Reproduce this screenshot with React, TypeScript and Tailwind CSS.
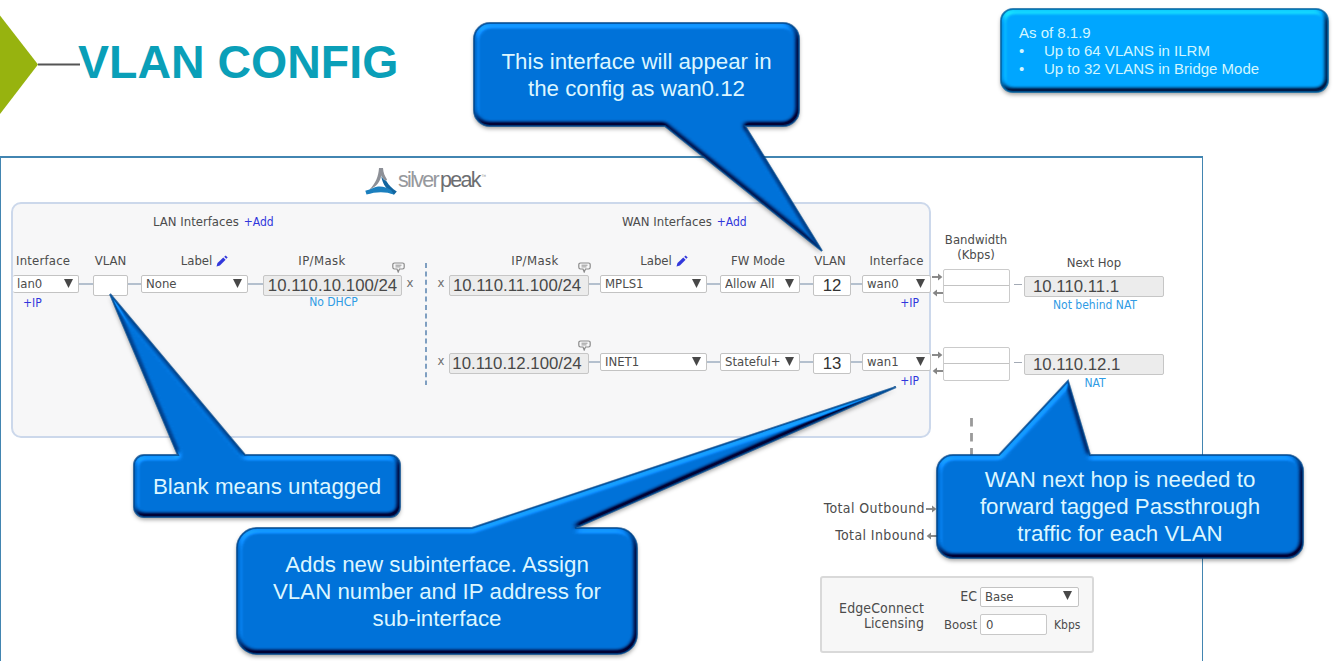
import type { ReactNode } from 'react'
import clsx from 'clsx'

interface WanRow {
  ip: string
  label: string
  fwMode: string
  vlan: string
  iface: string
  nextHop: string
  nat: string
}

const wanRows: WanRow[] = [
  {
    ip: '10.110.11.100/24',
    label: 'MPLS1',
    fwMode: 'Allow All',
    vlan: '12',
    iface: 'wan0',
    nextHop: '10.110.11.1',
    nat: 'Not behind NAT',
  },
  {
    ip: '10.110.12.100/24',
    label: 'INET1',
    fwMode: 'Stateful+',
    vlan: '13',
    iface: 'wan1',
    nextHop: '10.110.12.1',
    nat: 'NAT',
  },
]

// Shared bevel used by every blue shape
function BevelDefs() {
  return (
    <svg className="absolute h-0 w-0" aria-hidden="true">
      <defs>
        <filter id="bevel" x="-10%" y="-20%" width="120%" height="140%" colorInterpolationFilters="sRGB">
          <feGaussianBlur in="SourceAlpha" stdDeviation="2.8" result="soft" />
          <feDiffuseLighting in="soft" surfaceScale="6" diffuseConstant="1" lightingColor="#fff" result="light">
            <feDistantLight azimuth="243" elevation="45" />
          </feDiffuseLighting>
          <feComposite in="SourceGraphic" in2="light" operator="arithmetic" k1="0.72" k2="0.491" k3="0.3" k4="-0.212" result="lit" />
          <feComposite in="lit" in2="SourceAlpha" operator="in" result="shape" />
          <feDropShadow in="SourceGraphic" dx="0" dy="2.5" stdDeviation="2" floodColor="#000" floodOpacity="0.4" result="drop" />
          <feMerge>
            <feMergeNode in="drop" />
            <feMergeNode in="SourceGraphic" />
            <feMergeNode in="shape" />
          </feMerge>
        </filter>
        <filter id="rim" x="-10%" y="-20%" width="120%" height="140%">
          <feGaussianBlur stdDeviation="0.7" />
        </filter>
      </defs>
    </svg>
  )
}

function Callout({ className, path, children }: { className: string; path: string; children: ReactNode }) {
  return (
    <div className={clsx('absolute flex items-center justify-center', className)}>
      <svg className="absolute inset-0 h-full w-full overflow-visible">
        <path d={path} fill="#0072d9" filter="url(#bevel)" />
        <path d={path} fill="none" stroke="#00468c" strokeWidth="2" opacity=".75" filter="url(#rim)" />
      </svg>
      <p className="relative text-center text-[22.3px] leading-[27px] whitespace-nowrap text-[#dcf6ff]">{children}</p>
    </div>
  )
}

function Select({ value, className }: { value: string; className?: string }) {
  return (
    <div
      className={clsx(
        'flex h-[18px] shrink-0 items-center justify-between rounded-[2px] border border-[#c3c3c3] bg-white pr-[5px] pl-[4px] text-[13px]',
        className,
      )}
    >
      <span className="overflow-hidden whitespace-nowrap">{value}</span>
      <svg className="mb-[2px] h-[9px] w-[9px] shrink-0" viewBox="0 0 9 9">
        <path d="M0 0h9L4.5 9z" fill="#484848" />
      </svg>
    </div>
  )
}

function Link({ className }: { className: string }) {
  return <div className={clsx('mt-[8px] h-[2px] shrink-0 bg-[#b4c0ce]', className)} />
}

function IpBox({ value, className }: { value: string; className?: string }) {
  return (
    <div
      className={clsx(
        'relative flex h-[21px] shrink-0 items-center rounded-[2px] border-[1.5px] border-[#c6c6c6] bg-[#ececec] pt-[2px] font-[Liberation_Sans,sans-serif] text-[16.8px] leading-none whitespace-nowrap text-[#484848]',
        className,
      )}
    >
      {value}
    </div>
  )
}

function VlanBox({ value, className }: { value?: string; className?: string }) {
  return (
    <div
      className={clsx(
        'flex h-[21px] shrink-0 items-center justify-center rounded-[2px] border border-[#c3c3c3] bg-white pt-[1px] font-[Liberation_Sans,sans-serif] text-[16.8px] leading-none text-[#333]',
        className,
      )}
    >
      {value}
    </div>
  )
}

// Small comment bubble pinned above the IP field
function Comment({ className }: { className: string }) {
  return (
    <svg className={clsx('absolute h-[11px] w-[13px]', className)} viewBox="0 0 13 11" fill="none" stroke="#8b8b8b">
      <path d="M2.5 1h8a1.7 1.7 0 0 1 1.7 1.7v2.6A1.7 1.7 0 0 1 10.5 7h-3L6.2 10 5 7H2.5A1.7 1.7 0 0 1 .8 5.3V2.7A1.7 1.7 0 0 1 2.5 1z" strokeWidth="1.2" />
      <path d="M3.5 3.2h6M3.5 4.900h5" strokeWidth=".9" />
    </svg>
  )
}

function Pencil() {
  return (
    <svg className="ml-[4px] h-[12px] w-[12px] shrink-0" viewBox="0 0 12 12">
      <path d="M.5 11.500l1-3.500 5.800-5.600 2.300 2.300L3.900 10.400z" fill="#3238dc" />
      <path d="M8.200 1.700L9.700.4l2 2-1.400 1.400z" fill="#3238dc" />
    </svg>
  )
}

function Arrow({ left, className }: { left?: boolean; className?: string }) {
  return (
    <svg className={clsx('h-[8px] w-[11px] shrink-0', left && 'rotate-180', className)} viewBox="0 0 11 8">
      <path d="M0 4h8" fill="none" stroke="#858585" strokeWidth="1.9" />
      <path d="M6 .4L10.400 4 6 7.600z" fill="#858585" />
    </svg>
  )
}

function Remove({ className }: { className: string }) {
  return <span className={clsx('shrink-0 text-center text-[13px] leading-[15px] text-[#6e6e6e]', className)}>x</span>
}

function Logo() {
  return (
    <div className="flex h-[30px] items-center">
      <svg className="h-[27px] w-[32px]" viewBox="0 0 32 27">
        <path d="M14 0h4c.3 4.500 1.700 8 4 11.500l-1 1.500c-2.500-1.500-4-3.500-4.800-5.500C15.500 13 11.500 19 4.500 21.500 10.500 15.500 13.500 8.500 14 0z" fill="#8d9097" />
        <path d="M16.200 8c1.300 2.600 3 4.300 5.300 5.200 2.500 4 5.500 7.300 10.300 10.300L29 26.800C22 22 17.500 16.500 16.200 8z" fill="#12659f" />
        <path d="M.3 22.800C5 21.500 9 19.300 13 18.500c5-.5 9 1 13 3.500l3 4.600c-8-3.300-18-3.300-27.500 0z" fill="#1b7fbe" />
      </svg>
      <span className="ml-[1px] font-[Liberation_Sans,sans-serif] text-[21.5px] leading-none tracking-[-1.7px] text-[#97999d]">
        silver<span className="ml-[2px] text-[#6c6e72]">peak</span>
      </span>
      <span className="mb-[9px] ml-[2px] text-[3px] text-[#777]">TM</span>
    </div>
  )
}

function LanSide() {
  return (
    <div className="h-full w-[412px] shrink-0">
      <div className="flex h-[36px] items-center pl-[140px]">
        LAN Interfaces <span className="ml-[5px] text-[12px] text-[#3036dc]">+Add</span>
      </div>
      <div className="flex h-[35px] items-center pt-[6px]">
        <div className="w-[66px] pl-[3px] tracking-[0.2px]">Interface</div>
        <div className="ml-[14px] w-[35px] text-center">VLAN</div>
        <div className="ml-[13px] flex w-[107px] items-center justify-center pl-[20px]">
          Label <Pencil />
        </div>
        <div className="ml-[15px] w-[118px] text-center tracking-[0.4px]">IP/Mask</div>
      </div>
      <div className="flex h-[21px]">
        <Select value="lan0" className="w-[66px] border-l-0 pl-[3px]" />
        <Link className="w-[14px]" />
        <VlanBox className="w-[35px]" />
        <Link className="w-[13px]" />
        <Select value="None" className="w-[107px]" />
        <Link className="w-[15px]" />
        <IpBox value="10.110.10.100/24" className="w-[139px] justify-center" />
        <Remove className="w-[16px]" />
        <div className="relative">
          <Comment className="-top-[13px] right-[13px]" />
        </div>
      </div>
      <div className="flex items-start text-[12px] leading-[14px]">
        <span className="w-[250px] pl-[10px] text-[#3036dc]">+IP</span>
        <span className="-mt-[1px] w-[139px] pl-[2px] text-center text-[#2f9be4]">No DHCP</span>
      </div>
    </div>
  )
}

function WanSide() {
  return (
    <div className="h-full w-[504px] shrink-0">
      <div className="flex h-[36px] items-center pl-[195px]">
        WAN Interfaces <span className="ml-[5px] text-[12px] text-[#3036dc]">+Add</span>
      </div>
      <div className="flex h-[35px] items-center pt-[6px]">
        <div className="ml-[22px] w-[140px] pl-[32px] text-center tracking-[0.4px]">IP/Mask</div>
        <div className="ml-[11px] flex w-[107px] items-center justify-center pl-[21px]">
          Label <Pencil />
        </div>
        <div className="ml-[13px] w-[76px] text-center">FW Mode</div>
        <div className="ml-[16px] w-[36px] text-center">VLAN</div>
        <div className="ml-[14px] w-[69px] text-center tracking-[0.2px]">Interface</div>
      </div>
      {wanRows.map(row => (
        <div key={row.iface} className="h-[78px]">
          <div className="flex h-[21px] pl-[6px]">
            <Remove className="w-[16px]" />
            <div className="relative">
              <IpBox value={row.ip} className="w-[140px] justify-center pr-[4px]" />
              <Comment className="-top-[13px] right-[-2px]" />
            </div>
            <Link className="w-[11px]" />
            <Select value={row.label} className="w-[107px]" />
            <Link className="w-[13px]" />
            <Select value={row.fwMode} className="w-[80px]" />
            <Link className="w-[13px]" />
            <VlanBox value={row.vlan} className="w-[38px]" />
            <Link className="w-[11px]" />
            <Select value={row.iface} className="w-[69px]" />
          </div>
          <div className="pr-[12px] text-right text-[12px] leading-[14px] text-[#3036dc]">+IP</div>
        </div>
      ))}
    </div>
  )
}

function NextHops() {
  return (
    <div className="w-[240px]">
      <div className="flex h-[67px]">
        <div className="mt-[31px] ml-[10px] w-[70px] text-center leading-[14.5px]">
          Bandwidth
          <br />
          (Kbps)
        </div>
        <div className="mt-[53px] ml-[13px] w-[140px] text-center leading-[16px]">Next Hop</div>
      </div>
      {wanRows.map(row => (
        <div key={row.nextHop} className="flex h-[78px]">
          <div className="flex w-[12px] flex-col gap-[8px] pt-[4px] pl-[1px]">
            <Arrow />
            <Arrow left />
          </div>
          <div className="h-[34px] w-[67px] rounded-[2px] border-[1.5px] border-[#cbcbcb] bg-white">
            <div className="h-[16px] border-b border-[#c3c3c3]" />
          </div>
          <div className="mx-[4px] mt-[15px] h-[1px] w-[8px] bg-[#a3aab5]" />
          <div className="mt-[7px]">
            <IpBox value={row.nextHop} className="ml-[-2px] w-[140px] pl-[8px]" />
            <p className="mt-[1px] w-[138px] text-center text-[12px] leading-[14px] text-[#2f9be4]">{row.nat}</p>
          </div>
        </div>
      ))}
      <svg className="mt-[-7px] ml-[39px] h-[48px] w-[3px]" viewBox="0 0 3 48">
        <path d="M1.5 0v48" stroke="#9a9a9a" strokeWidth="2.8" strokeDasharray="8.5 6.5" />
      </svg>
    </div>
  )
}

function Licensing() {
  return (
    <div className="ml-[819px] flex h-[77px] w-[274px] rounded-[3px] border-2 border-[#d9d9d9] bg-[#f7f7f7]">
      <div className="mt-[23px] w-[102px] text-right text-[14px] leading-[15px] tracking-[0.1px]">
        EdgeConnect
        <br />
        Licensing
      </div>
      <div className="mt-[8px] ml-[17px]">
        <div className="flex items-center">
          <span className="w-[36px] text-right text-[14px]">EC</span>
          <Select value="Base" className="ml-[3px] h-[20px] w-[99px] pr-[6px]" />
        </div>
        <div className="mt-[7px] flex items-center">
          <span className="w-[36px] text-right">Boost</span>
          <div className="ml-[3px] h-[21px] w-[67px] rounded-[2px] border border-[#c8c8c8] bg-white pl-[5px] leading-[19px]">0</div>
          <span className="ml-[7px] text-[12px]">Kbps</span>
        </div>
      </div>
    </div>
  )
}

export default function App() {
  return (
    <div className="relative h-[661px] w-[1334px] overflow-hidden bg-white font-[Liberation_Sans,Arial,sans-serif]">
      <BevelDefs />
      <header className="flex h-[156px] items-start">
        <svg className="h-[128px] w-[80px] shrink-0" viewBox="0 0 80 128">
          <path d="M0 15.5L38 64.5 0 114z" fill="#97b30f" />
          <path d="M38 64.5h42" stroke="#555" strokeWidth="2" />
        </svg>
        <h1 className="mt-[35px] ml-[-2px] text-[46.5px] leading-[54px] font-bold whitespace-nowrap text-[#0a9fb8]">VLAN CONFIG</h1>
        <div className="relative mt-[9px] mr-[6px] ml-auto h-[83px] w-[327px] shrink-0">
          <svg className="absolute inset-0 h-full w-full overflow-visible">
            <rect width="327" height="83" rx="12" fill="#00a6ff" filter="url(#bevel)" />
            <rect width="327" height="83" rx="12" fill="none" stroke="#00609f" strokeWidth="2" opacity=".75" filter="url(#rim)" />
          </svg>
          <div className="relative pt-[15px] pl-[18px] text-[15px] leading-[18px] text-[#d2f6ff]">
            <p>As of 8.1.9</p>
            <ul>
              <li className="flex"><span className="w-[25px]">•</span>Up to 64 VLANS in ILRM</li>
              <li className="flex"><span className="w-[25px]">•</span>Up to 32 VLANS in Bridge Mode</li>
            </ul>
          </div>
        </div>
      </header>

      <section className="h-[505px] w-[1203px] border-x-[1.5px] border-t-2 border-[#4285b1] font-[DejaVu_Sans_Condensed,DejaVu_Sans,sans-serif] text-[13px] text-[#4c4c4c]">
        <div className="flex h-[44px] pt-[8px] pl-[364px]">
          <Logo />
        </div>
        <div className="flex h-[236px] pl-[10px]">
          <div className="flex h-[236px] w-[920px] shrink-0 rounded-[10px] border-2 border-[#ccd8eb] bg-[#f7f7f8]">
            <LanSide />
            <svg className="mt-[59px] h-[122px] w-[2px] shrink-0" viewBox="0 0 2 122">
              <path d="M1 0v122" stroke="#7f9fc1" strokeWidth="2" strokeDasharray="5 3.4" />
            </svg>
            <WanSide />
          </div>
          <NextHops />
        </div>
        <div className="flex h-[138px] w-[936px] flex-col items-end pt-[61px] text-[14px] tracking-[0.4px]">
          <div className="flex h-[19px] items-center">Total Outbound<Arrow className="ml-[1px]" /></div>
          <div className="mt-[8px] flex h-[19px] items-center">Total Inbound<Arrow left className="ml-[1px]" /></div>
        </div>
        <Licensing />
      </section>

      <Callout
        className="top-[23px] left-[474px] h-[103px] w-[325px]"
        path="M16 0H309a16 16 0 0 1 16 16V87a16 16 0 0 1-16 16H271L348 228 191 103H16a16 16 0 0 1-16-16V16a16 16 0 0 1 16-16z"
      >
        This interface will appear in
        <br />
        the config as wan0.12
      </Callout>
      <Callout
        className="top-[455px] left-[134px] h-[62px] w-[266px]"
        path="M10 0H44L-24-161 111 0H256a10 10 0 0 1 10 10V52a10 10 0 0 1-10 10H10a10 10 0 0 1-10-10V10a10 10 0 0 1 10-10z"
      >
        Blank means untagged
      </Callout>
      <Callout
        className="top-[528px] left-[237px] h-[126px] w-[400px]"
        path="M20 0H235L659-141 338 0H380a20 20 0 0 1 20 20V106a20 20 0 0 1-20 20H20a20 20 0 0 1-20-20V20a20 20 0 0 1 20-20z"
      >
        Adds new subinterface. Assign
        <br />
        VLAN number and IP address for
        <br />
        sub-interface
      </Callout>
      <Callout
        className="top-[455px] left-[937px] h-[103px] w-[366px]"
        path="M16 0H62L131-74 153 0H350a16 16 0 0 1 16 16V87a16 16 0 0 1-16 16H16a16 16 0 0 1-16-16V16a16 16 0 0 1 16-16z"
      >
        WAN next hop is needed to
        <br />
        forward tagged Passthrough
        <br />
        traffic for each VLAN
      </Callout>
    </div>
  )
}
